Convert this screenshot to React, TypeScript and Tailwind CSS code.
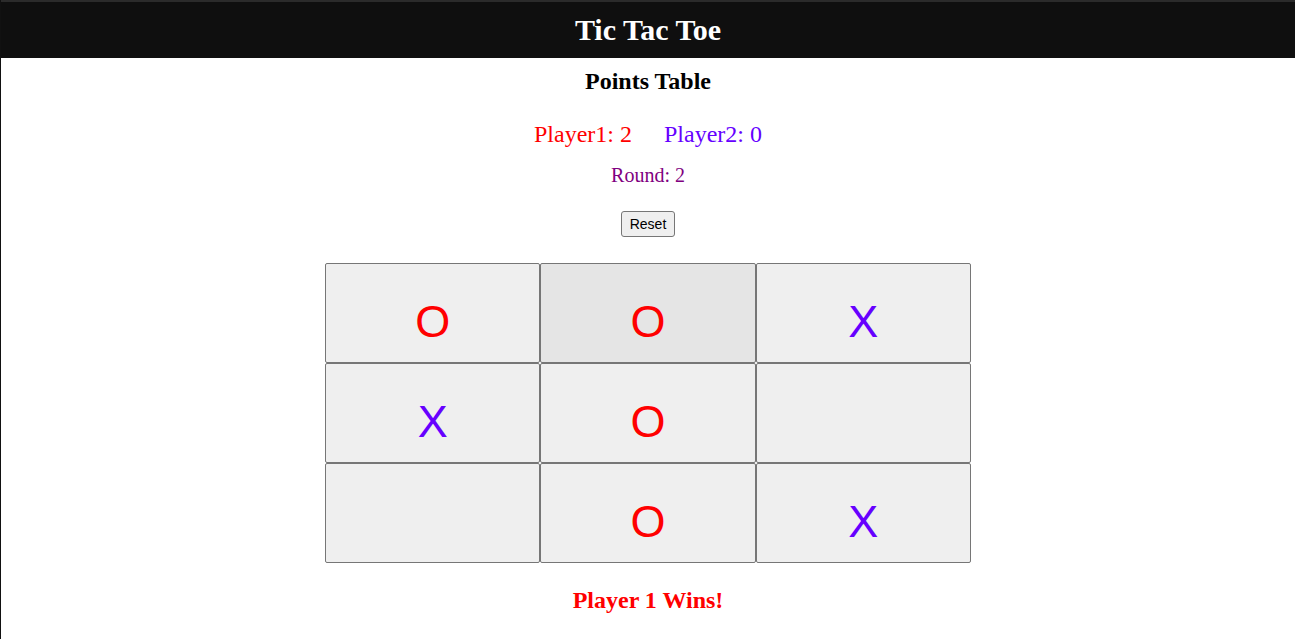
import React from 'react';

type Mark = 'X' | 'O' | '';

const board: Mark[] = ['O', 'O', 'X', 'X', 'O', '', '', 'O', 'X'];

function Cell({ mark, active }: { mark: Mark; active?: boolean }) {
    return (
        <button
            className={`h-[100px] pt-[16px] border border-[#767676] rounded-[2px] flex items-center justify-center text-[45px] leading-none font-['Liberation_Sans',Arial,sans-serif] ${
                active ? 'bg-[#e5e5e5]' : 'bg-[#efefef]'
            } ${mark === 'O' ? 'text-[#ff0000]' : 'text-[#6600ff]'}`}
        >
            {mark}
        </button>
    );
}

export default function App() {
    return (
        <div className="min-h-[639px] bg-white border-l border-[#111111] font-['Liberation_Serif','Times_New_Roman',serif]">
            <header className="h-[58px] bg-[#0f0f0f] border-t-2 border-[#2b2b2b] flex items-center justify-center">
                <h1 className="text-[30px] font-bold text-white leading-none">Tic Tac Toe</h1>
            </header>

            <div className="flex flex-col items-center">
                <div className="h-[46px] flex items-center">
                    <h2 className="text-[24px] font-bold text-black leading-none">Points Table</h2>
                </div>
                <div className="h-[60px] flex items-center gap-8 text-[24px] leading-none">
                    <span className="text-[#ff0000]">Player1: 2</span>
                    <span className="text-[#6600ff]">Player2: 0</span>
                </div>
                <div className="h-[22px] flex items-center text-[20px] leading-none text-[#800080]">
                    Round: 2
                </div>

                <button className="mt-[25px] h-[26px] px-[8px] border border-[#767676] rounded-[3px] bg-[#efefef] text-[14px] leading-none text-black font-['Liberation_Sans',Arial,sans-serif]">
                    Reset
                </button>

                <div className="mt-[26px] w-[646px] grid grid-cols-3">
                    {board.map((m, i) => (
                        <Cell key={i} mark={m} active={i === 1} />
                    ))}
                </div>

                <div className="h-[74px] flex items-center">
                    <p className="text-[24px] font-bold text-[#ff0000] leading-none">Player 1 Wins!</p>
                </div>
            </div>
        </div>
    );
}
